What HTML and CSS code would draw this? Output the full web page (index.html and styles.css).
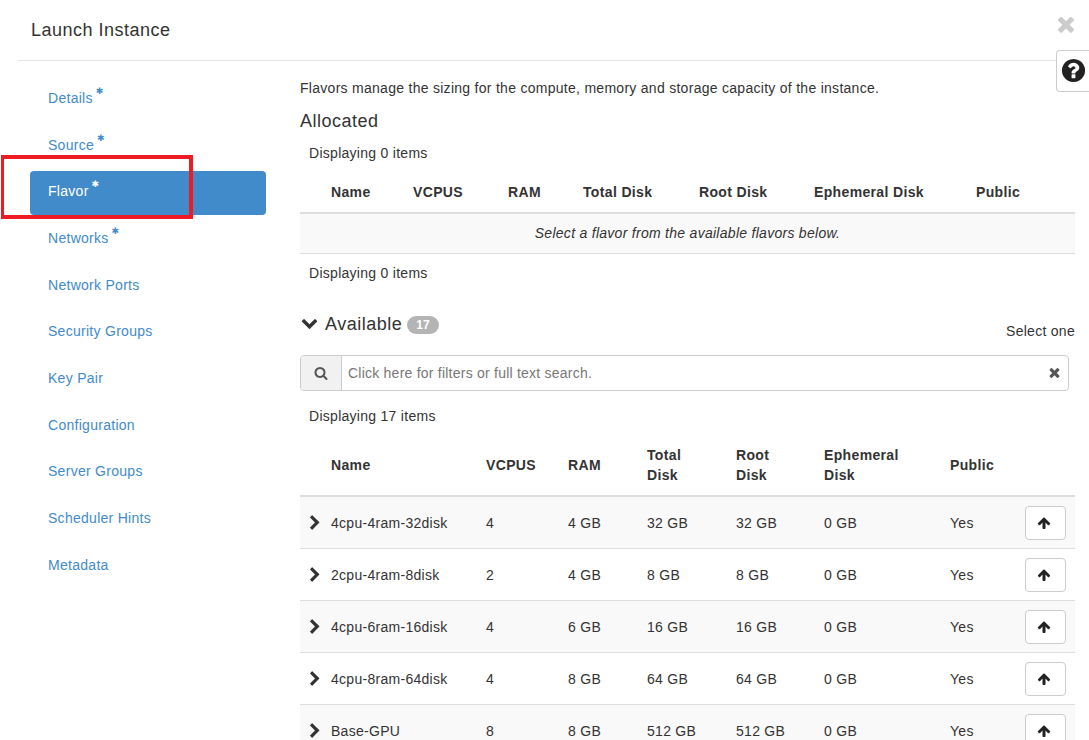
FILE: index.html
```html
<!DOCTYPE html>
<html lang="en">
<head>
  <meta charset="UTF-8" />
  <title>Launch Instance</title>
  <link rel="stylesheet" href="styles.css">
</head>
<body>

  <svg class="sprites" xmlns="http://www.w3.org/2000/svg">
    <symbol id="i-down" viewBox="0 0 1792 1792"><path d="M1683 808l-742 741q-19 19-45 19t-45-19l-742-741q-19-19-19-45.5t19-45.5l166-165q19-19 45-19t45 19l531 531 531-531q19-19 45-19t45 19l166 165q19 19 19 45.5t-19 45.5z"/></symbol>
    <symbol id="i-right" viewBox="0 0 1792 1792"><path d="M1363 877l-742 742q-19 19-45 19t-45-19l-166-166q-19-19-19-45t19-45l531-531-531-531q-19-19-19-45t19-45l166-166q19-19 45-19t45 19l742 742q19 19 19 45t-19 45z"/></symbol>
    <symbol id="i-search" viewBox="0 0 1792 1792"><path d="M1216 832q0-185-131.5-316.5t-316.5-131.5-316.5 131.5-131.5 316.5 131.5 316.5 316.5 131.5 316.5-131.5 131.5-316.5zm512 832q0 52-38 90t-90 38q-54 0-90-38l-343-342q-179 124-399 124-143 0-273.5-55.5t-225-150-150-225-55.5-273.5 55.5-273.5 150-225 225-150 273.5-55.5 273.5 55.5 225 150 150 225 55.5 273.5q0 220-124 399l343 343q37 37 37 90z"/></symbol>
    <symbol id="i-times" viewBox="0 0 1792 1792"><path d="M1490 1322q0 40-28 68l-136 136q-28 28-68 28t-68-28l-294-294-294 294q-28 28-68 28t-68-28l-136-136q-28-28-28-68t28-68l294-294-294-294q-28-28-28-68t28-68l136-136q28-28 68-28t68 28l294 294 294-294q28-28 68-28t68 28l136 136q28 28 28 68t-28 68l-294 294 294 294q28 28 28 68z"/></symbol>
    <symbol id="i-up" viewBox="0 0 1792 1792"><path d="M1675 971q0 51-37 90l-75 75q-38 38-91 38-54 0-90-38l-294-293v704q0 52-37.5 84.5t-90.5 32.5h-128q-53 0-90.5-32.5t-37.5-84.5v-704l-294 293q-36 38-90 38t-90-38l-75-75q-38-38-38-90 0-53 38-91l651-651q35-37 90-37 54 0 91 37l651 651q37 39 37 91z"/></symbol>
    <symbol id="i-help" viewBox="0 0 1792 1792"><path d="M1024 1376v-192q0-14-9-23t-23-9h-192q-14 0-23 9t-9 23v192q0 14 9 23t23 9h192q14 0 23-9t9-23zm256-672q0-88-55.5-163t-138.5-116-170-41q-243 0-371 213-15 24 8 42l132 100q7 6 19 6 16 0 25-12 53-68 86-92 34-24 86-24 48 0 85.5 26t37.5 59q0 38-20 61t-68 45q-63 28-115.5 86.5t-52.5 125.5v36q0 14 9 23t23 9h192q14 0 23-9t9-23q0-19 21.5-49.5t54.5-49.5q32-18 49-28.5t46-35 44.5-48 28-60.5 12.5-81zm384 192q0 209-103 385.5t-279.5 279.5-385.5 103-385.5-103-279.5-279.5-103-385.5 103-385.5 279.5-279.5 385.5-103 385.5 103 279.5 279.5 103 385.5z"/></symbol>
  </svg>

  <header class="modal-header">
    <h4 class="modal-title">Launch Instance</h4>
  </header>
  <svg class="icon close-icon"><use href="#i-times"/></svg>
  <div class="help-tab"><svg class="icon"><use href="#i-help"/></svg></div>

  <div class="wizard">
    <nav class="steps">
      <a class="step">Details<span class="req">✱</span></a>
      <a class="step">Source<span class="req">✱</span></a>
      <a class="step active">Flavor<span class="req">✱</span></a>
      <a class="step">Networks<span class="req">✱</span></a>
      <a class="step">Network Ports</a>
      <a class="step">Security Groups</a>
      <a class="step">Key Pair</a>
      <a class="step">Configuration</a>
      <a class="step">Server Groups</a>
      <a class="step">Scheduler Hints</a>
      <a class="step">Metadata</a>
    </nav>

    <main class="content">
      <p class="intro">Flavors manage the sizing for the compute, memory and storage capacity of the instance.</p>
      <h3 class="section-title">Allocated</h3>
      <div class="count count-top">Displaying 0 items</div>

      <table class="grid grid-allocated">
        <colgroup>
          <col class="a1"><col class="a2"><col class="a3"><col class="a4"><col class="a5"><col class="a6"><col class="a7"><col class="a8">
        </colgroup>
        <thead>
          <tr><th></th><th>Name</th><th>VCPUS</th><th>RAM</th><th>Total Disk</th><th>Root Disk</th><th>Ephemeral Disk</th><th>Public</th></tr>
        </thead>
        <tbody>
          <tr><td class="empty" colspan="8">Select a flavor from the available flavors below.</td></tr>
        </tbody>
      </table>
      <div class="count count-bottom">Displaying 0 items</div>

      <div class="available-head">
        <h3 class="section-title available-title">
          <svg class="icon down-icon"><use href="#i-down"/></svg>
          Available
          <span class="badge">17</span>
        </h3>
        <span class="select-one">Select one</span>
      </div>

      <div class="search">
        <span class="search-addon"><svg class="icon"><use href="#i-search"/></svg></span>
        <span class="search-text">Click here for filters or full text search.</span>
        <svg class="icon search-clear"><use href="#i-times"/></svg>
      </div>

      <div class="count count-avail">Displaying 17 items</div>

      <table class="grid grid-available">
        <colgroup>
          <col class="b1"><col class="b2"><col class="b3"><col class="b4"><col class="b5"><col class="b6"><col class="b7"><col class="b8"><col class="b9">
        </colgroup>
        <thead>
          <tr><th></th><th>Name</th><th>VCPUS</th><th>RAM</th><th>Total<br>Disk</th><th>Root<br>Disk</th><th>Ephemeral<br>Disk</th><th>Public</th><th></th></tr>
        </thead>
        <tbody>
          <tr class="odd">
            <td class="expand"><svg class="icon"><use href="#i-right"/></svg></td>
            <td>4cpu-4ram-32disk</td><td>4</td><td>4 GB</td><td>32 GB</td><td>32 GB</td><td>0 GB</td><td>Yes</td>
            <td><button class="btn-up"><svg class="icon"><use href="#i-up"/></svg></button></td>
          </tr>
          <tr>
            <td class="expand"><svg class="icon"><use href="#i-right"/></svg></td>
            <td>2cpu-4ram-8disk</td><td>2</td><td>4 GB</td><td>8 GB</td><td>8 GB</td><td>0 GB</td><td>Yes</td>
            <td><button class="btn-up"><svg class="icon"><use href="#i-up"/></svg></button></td>
          </tr>
          <tr class="odd">
            <td class="expand"><svg class="icon"><use href="#i-right"/></svg></td>
            <td>4cpu-6ram-16disk</td><td>4</td><td>6 GB</td><td>16 GB</td><td>16 GB</td><td>0 GB</td><td>Yes</td>
            <td><button class="btn-up"><svg class="icon"><use href="#i-up"/></svg></button></td>
          </tr>
          <tr>
            <td class="expand"><svg class="icon"><use href="#i-right"/></svg></td>
            <td>4cpu-8ram-64disk</td><td>4</td><td>8 GB</td><td>64 GB</td><td>64 GB</td><td>0 GB</td><td>Yes</td>
            <td><button class="btn-up"><svg class="icon"><use href="#i-up"/></svg></button></td>
          </tr>
          <tr class="odd">
            <td class="expand"><svg class="icon"><use href="#i-right"/></svg></td>
            <td>Base-GPU</td><td>8</td><td>8 GB</td><td>512 GB</td><td>512 GB</td><td>0 GB</td><td>Yes</td>
            <td><button class="btn-up"><svg class="icon"><use href="#i-up"/></svg></button></td>
          </tr>
        </tbody>
      </table>
    </main>
  </div>

  <div class="annotation"></div>

</body>
</html>
```

FILE: styles.css
```css
html, body {
  height: 740px;
  overflow: hidden;
}
body {
  margin: 0;
  background: #fff;
  color: #333;
  font-family: "Liberation Sans", Arial, sans-serif;
  font-size: 14px;
  line-height: 20px;
  letter-spacing: 0.28px;
}
.sprites {
  display: none;
}
.icon {
  display: block;
  width: 16px;
  height: 16px;
  fill: currentColor;
}

/* header */
.modal-header {
  height: 60px;
  margin-left: 18px;
  width: 1040px;
  border-bottom: 1px solid #e5e5e5;
  box-sizing: content-box;
}
.modal-title {
  margin: 0;
  padding: 18px 0 0 13px;
  font-size: 18px;
  font-weight: normal;
  line-height: 24px;
  letter-spacing: 0.5px;
}
.close-icon {
  position: absolute;
  top: 12px;
  left: 1054px;
  width: 24px;
  height: 24px;
  color: #ccc;
}
.help-tab {
  position: absolute;
  top: 50px;
  left: 1056px;
  width: 33px;
  height: 42px;
  box-sizing: border-box;
  padding: 6px 0 0 3px;
  background: #fff;
  border: 1px solid #ccc;
  border-right: 0;
  border-radius: 4px 0 0 4px;
}
.help-tab .icon {
  width: 27px;
  height: 27px;
  color: #222;
}

/* wizard layout */
.wizard {
  display: flex;
}
.steps {
  width: 236px;
  margin-left: 30px;
  padding-top: 17px;
  flex: none;
}
.step {
  display: block;
  height: 44px;
  margin-bottom: 2.67px;
  padding: 10px 18px 14px;
  box-sizing: border-box;
  color: #428bca;
  border-radius: 4px;
}
.step.active {
  background: #428bca;
  color: #fff;
}
.req {
  margin-left: 3px;
  font-family: "DejaVu Sans", sans-serif;
  font-size: 9px;
  line-height: 0;
  letter-spacing: 0;
  vertical-align: 9px;
}
.content {
  width: 775px;
  margin-left: 34px;
  padding-top: 17px;
}

/* text blocks */
.intro {
  margin: 0 0 11px;
}
.section-title {
  margin: 0;
  font-size: 18px;
  font-weight: normal;
  line-height: 24px;
  letter-spacing: 0.5px;
}
.count {
  padding-left: 9px;
}
.count-top {
  margin-top: 10px;
  margin-bottom: 9px;
}
.count-bottom {
  margin-top: 9px;
}
.available-head {
  display: flex;
  justify-content: space-between;
  margin-top: 28px;
}
.available-title {
  display: flex;
  align-items: center;
  height: 26px;
}
.down-icon {
  width: 17px;
  height: 17px;
  margin: -3px 7px 0 1px;
}
.badge {
  margin: 2px 0 0 5px;
  padding: 0 9px;
  height: 18px;
  line-height: 18px;
  border-radius: 9px;
  background: #b4b4b4;
  color: #fff;
  font-size: 12px;
  font-weight: bold;
  letter-spacing: 0;
}
.select-one {
  margin-top: 10px;
}

/* search bar */
.search {
  display: flex;
  align-items: center;
  width: 769px;
  height: 36px;
  margin-top: 14px;
  box-sizing: border-box;
  border: 1px solid #ccc;
  border-radius: 4px;
}
.search-addon {
  display: flex;
  align-items: center;
  justify-content: center;
  width: 41px;
  height: 100%;
  flex: none;
  background: #f1f1f1;
  border-right: 1px solid #ccc;
  border-radius: 3px 0 0 3px;
  box-sizing: border-box;
  color: #555;
}
.search-addon .icon {
  width: 14px;
  height: 14px;
}
.search-text {
  flex: 1;
  padding-left: 6px;
  color: #777;
  letter-spacing: 0.23px;
}
.search-clear {
  width: 15px;
  height: 15px;
  margin: -2px 6px 0 0;
  color: #555;
}
.count-avail {
  margin-top: 15px;
}

/* tables */
.grid {
  width: 775px;
  table-layout: fixed;
  border-collapse: separate;
  border-spacing: 0;
}
.grid th {
  padding: 0 8px;
  text-align: left;
  font-weight: bold;
  letter-spacing: 0.35px;
  border-bottom: 2px solid #ddd;
}
.grid td {
  padding: 0 8px;
  border-bottom: 1px solid #ddd;
}
.grid-allocated th {
  height: 40px;
}
.grid .empty {
  height: 37px;
  padding-bottom: 2px;
  text-align: center;
  font-style: italic;
  background: #f9f9f9;
}
.grid-available {
  margin-top: 9px;
}
.grid-available th {
  height: 60px;
}
.grid-available td {
  height: 51px;
}
.odd td {
  background: #f9f9f9;
}
.grid .expand {
  padding: 0 0 0 7px;
}
.expand .icon {
  width: 16px;
  height: 16px;
  color: #333;
}
.btn-up {
  display: flex;
  align-items: center;
  justify-content: center;
  width: 41px;
  height: 34px;
  padding: 0 3px 0 0;
  background: #fff;
  border: 1px solid #ccc;
  border-radius: 4px;
  color: #222;
}
.btn-up .icon {
  width: 14px;
  height: 14px;
}

.a1 { width: 23px; }
.a2 { width: 82px; }
.a3 { width: 95px; }
.a4 { width: 75px; }
.a5 { width: 116px; }
.a6 { width: 115px; }
.a7 { width: 162px; }
.a8 { width: 107px; }

.b1 { width: 23px; }
.b2 { width: 155px; }
.b3 { width: 82px; }
.b4 { width: 79px; }
.b5 { width: 89px; }
.b6 { width: 88px; }
.b7 { width: 126px; }
.b8 { width: 75px; }
.b9 { width: 58px; }

/* red marker drawn over the screenshot */
.annotation {
  position: absolute;
  top: 155px;
  left: 1px;
  width: 192px;
  height: 64px;
  box-sizing: border-box;
  border: 4px solid #ed1c24;
  border-left-width: 3px;
}
```
